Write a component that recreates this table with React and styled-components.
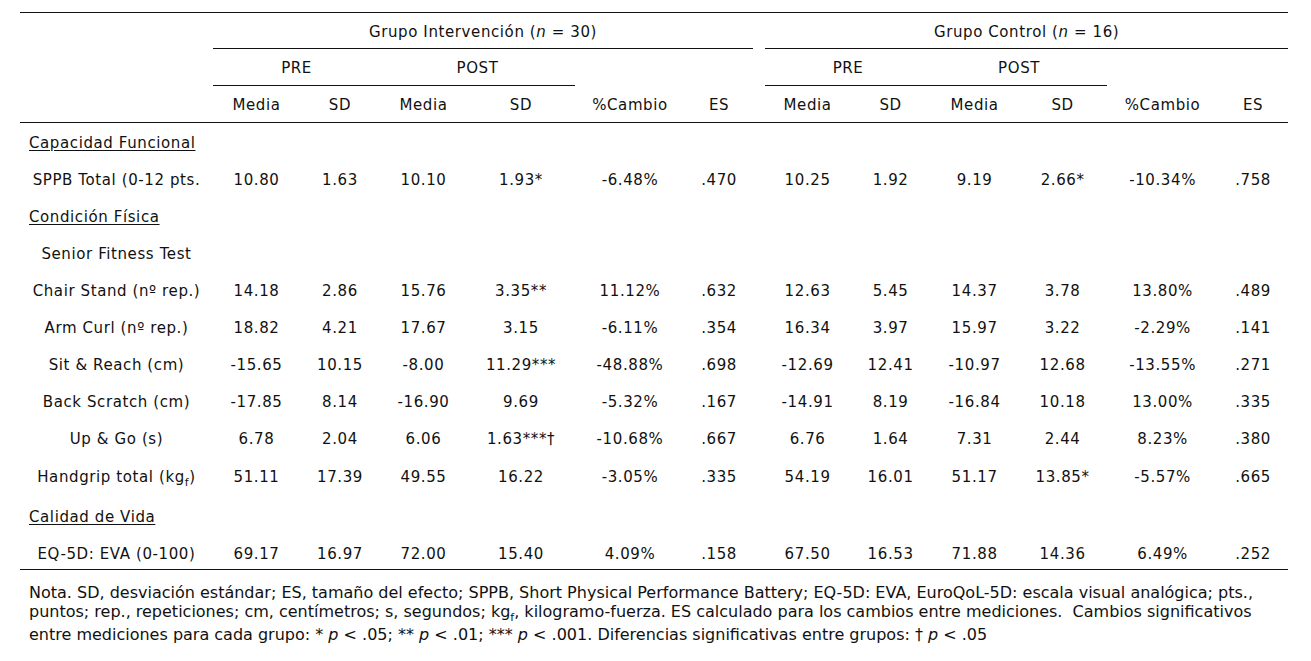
import React from 'react';
import styled, { createGlobalStyle } from 'styled-components';

const GlobalStyle = createGlobalStyle`
  html, body {
    margin: 0;
    padding: 0;
    background: #ffffff;
  }
  body {
    font-family: 'DejaVu Sans', Verdana, sans-serif;
    color: #111;
  }
`;

const Page = styled.div`
  padding: 12px 23px 0 20px;
`;

const Table = styled.table`
  width: 1268px;
  table-layout: fixed;
  border-collapse: separate;
  border-spacing: 0;
  font-size: 15px;
  letter-spacing: 0.6px;
  color: #111;
`;

const HeadRow = styled.tr`
  height: ${(p) => p.$h}px;
`;

const Th = styled.th`
  font-weight: normal;
  padding: 2px 0 0;
  text-align: center;
  vertical-align: middle;
  white-space: nowrap;
  border-top: ${(p) => (p.$top ? '1px solid #111' : '0')};
  border-bottom: ${(p) => (p.$line ? '1px solid #111' : '1px solid transparent')};
`;

const Tr = styled.tr`
  height: ${(p) => p.$h || 37}px;
`;

const Td = styled.td`
  padding: 2px 0 0;
  text-align: center;
  vertical-align: middle;
  white-space: nowrap;
  border-bottom: ${(p) => (p.$last ? '1px solid #111' : '0')};
`;

const Section = styled.td`
  padding: 2px 0 0 9px;
  text-align: left;
  vertical-align: middle;
  text-decoration: underline;
  text-underline-offset: 2px;
`;

const Note = styled.div`
  margin: 13px 0 0 9px;
  font-family: 'DejaVu Sans', Tahoma, sans-serif;
  font-size: 16px;
  line-height: 19px;
  color: #111;
`;

const NoteLine = styled.div`
  white-space: nowrap;
  height: 19px;
  margin-top: ${(p) => p.$gap || 0}px;
`;

const Sub = styled.sub`
  font-size: 11px;
  vertical-align: -4px;
  line-height: 0;
`;

const widths = [193, 87, 80, 87, 108, 110, 68, 12, 85, 81, 87, 89, 111, 70];

const rows = [
  { section: 'Capacidad Funcional' },
  {
    label: 'SPPB Total (0-12 pts.',
    a: ['10.80', '1.63', '10.10', '1.93*', '-6.48%', '.470'],
    b: ['10.25', '1.92', '9.19', '2.66*', '-10.34%', '.758'],
  },
  { section: 'Condición Física' },
  { label: 'Senior Fitness Test', a: [], b: [] },
  {
    label: 'Chair Stand (nº rep.)',
    a: ['14.18', '2.86', '15.76', '3.35**', '11.12%', '.632'],
    b: ['12.63', '5.45', '14.37', '3.78', '13.80%', '.489'],
  },
  {
    label: 'Arm Curl (nº rep.)',
    a: ['18.82', '4.21', '17.67', '3.15', '-6.11%', '.354'],
    b: ['16.34', '3.97', '15.97', '3.22', '-2.29%', '.141'],
  },
  {
    label: 'Sit & Reach (cm)',
    a: ['-15.65', '10.15', '-8.00', '11.29***', '-48.88%', '.698'],
    b: ['-12.69', '12.41', '-10.97', '12.68', '-13.55%', '.271'],
  },
  {
    label: 'Back Scratch (cm)',
    a: ['-17.85', '8.14', '-16.90', '9.69', '-5.32%', '.167'],
    b: ['-14.91', '8.19', '-16.84', '10.18', '13.00%', '.335'],
  },
  {
    label: 'Up & Go (s)',
    a: ['6.78', '2.04', '6.06', '1.63***†', '-10.68%', '.667'],
    b: ['6.76', '1.64', '7.31', '2.44', '8.23%', '.380'],
  },
  {
    h: 39,
    label: (
      <>
        Handgrip total (kg<Sub>f</Sub>)
      </>
    ),
    a: ['51.11', '17.39', '49.55', '16.22', '-3.05%', '.335'],
    b: ['54.19', '16.01', '51.17', '13.85*', '-5.57%', '.665'],
  },
  { section: 'Calidad de Vida', h: 41 },
  {
    h: 34,
    label: 'EQ-5D: EVA (0-100)',
    a: ['69.17', '16.97', '72.00', '15.40', '4.09%', '.158'],
    b: ['67.50', '16.53', '71.88', '14.36', '6.49%', '.252'],
  },
];

function DataRow({ row, last }) {
  const pad = (arr) => Array.from({ length: 6 }, (_, i) => arr[i] || '');
  return (
    <Tr $h={row.h}>
      <Td $last={last}>{row.label}</Td>
      {pad(row.a).map((v, i) => (
        <Td key={'a' + i} $last={last}>{v}</Td>
      ))}
      <Td $last={last} />
      {pad(row.b).map((v, i) => (
        <Td key={'b' + i} $last={last}>{v}</Td>
      ))}
    </Tr>
  );
}

function GroupHead() {
  return (
    <>
      <Th $line>Media</Th>
      <Th $line>SD</Th>
      <Th $line>Media</Th>
      <Th $line>SD</Th>
      <Th $line>%Cambio</Th>
      <Th $line>ES</Th>
    </>
  );
}

export default function App() {
  return (
    <Page>
      <GlobalStyle />
      <Table>
        <colgroup>
          {widths.map((w, i) => (
            <col key={i} style={{ width: w }} />
          ))}
        </colgroup>
        <thead>
          <HeadRow $h={37}>
            <Th rowSpan={3} $top $line />
            <Th colSpan={6} $top $line>
              Grupo Intervención (<i>n</i> = 30)
            </Th>
            <Th rowSpan={3} $top $line />
            <Th colSpan={6} $top $line>
              Grupo Control (<i>n</i> = 16)
            </Th>
          </HeadRow>
          <HeadRow $h={37}>
            <Th colSpan={2} $line>PRE</Th>
            <Th colSpan={2} $line>POST</Th>
            <Th colSpan={2} />
            <Th colSpan={2} $line>PRE</Th>
            <Th colSpan={2} $line>POST</Th>
            <Th colSpan={2} />
          </HeadRow>
          <HeadRow $h={37}>
            <GroupHead />
            <GroupHead />
          </HeadRow>
        </thead>
        <tbody>
          {rows.map((r, i) =>
            r.section ? (
              <Tr key={i} $h={r.h}>
                <Section colSpan={14}>{r.section}</Section>
              </Tr>
            ) : (
              <DataRow key={i} row={r} last={i === rows.length - 1} />
            )
          )}
        </tbody>
      </Table>
      <Note>
        <NoteLine>
          Nota. SD, desviación estándar; ES, tamaño del efecto; SPPB, Short Physical Performance Battery; EQ-5D: EVA,
          EuroQoL-5D: escala visual analógica; pts.,
        </NoteLine>
        <NoteLine>
          puntos; rep., repeticiones; cm, centímetros; s, segundos; kg<Sub>f</Sub>, kilogramo-fuerza. ES calculado para
          los cambios entre mediciones.&nbsp; Cambios significativos
        </NoteLine>
        <NoteLine $gap={4}>
          entre mediciones para cada grupo: * <i>p</i> &lt; .05; ** <i>p</i> &lt; .01; *** <i>p</i> &lt; .001.
          Diferencias significativas entre grupos: † <i>p</i> &lt; .05
        </NoteLine>
      </Note>
    </Page>
  );
}
